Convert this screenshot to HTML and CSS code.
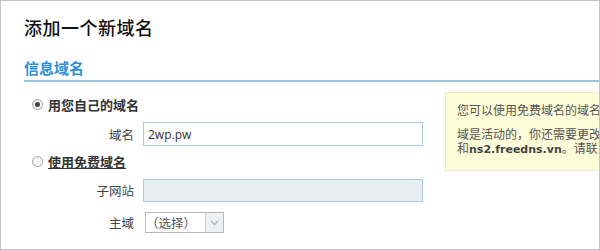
FILE: index.html
```html
<!DOCTYPE html>
<html lang="zh-cn">
<head>
  <meta charset="UTF-8">
  <meta name="viewport" content="width=device-width, initial-scale=1.0">
  <title>添加一个新域名</title>
  <link rel="stylesheet" href="styles.css">
</head>
<body>
  <div class="page">
    <h1>添加一个新域名</h1>
    <h2 class="section-title">信息域名</h2>

    <div class="content">
      <!-- 表单 -->
      <form class="domain-form">
        <label class="radio-row">
          <input type="radio" name="mode" checked>
          <span>用您自己的域名</span>
        </label>
        <div class="field-row">
          <span class="field-label">域名</span>
          <input class="text-input" type="text" value="2wp.pw">
        </div>

        <label class="radio-row">
          <input type="radio" name="mode">
          <span class="underline">使用免费域名</span>
        </label>
        <div class="field-row">
          <span class="field-label">子网站</span>
          <input class="text-input disabled" type="text" disabled>
        </div>
        <div class="field-row">
          <span class="field-label">主域</span>
          <div class="fake-select">
            <span class="fake-select-text">（选择）</span>
            <span class="fake-select-arrow">
              <svg width="9" height="6" viewBox="0 0 9 6"><path d="M1 1 L4.5 4.5 L8 1" fill="none" stroke="#a8b4bc" stroke-width="1.3"/></svg>
            </span>
          </div>
        </div>
      </form>

      <!-- 提示框 -->
      <div class="note">
        <p>您可以使用免费域名的域名服务器。</p>
        <p>域是活动的，你还需要更改域名服务器为ns1.freedns.vn<br>和<b>ns2.freedns.vn</b>。请联系系统管理员。</p>
      </div>
    </div>
  </div>
</body>
</html>
```

FILE: styles.css
```css
* {
  box-sizing: border-box;
}
body {
  margin: 0;
  font-family: "Noto Sans CJK SC", sans-serif;
  color: #333;
  background: #fff;
}
.page {
  width: 600px;
  height: 250px;
  border: 1px solid #c4c4c4;
  padding: 14px 0 0 23px;
  overflow: hidden;
}
h1 {
  margin: 0;
  font-size: 18px;
  line-height: 24px;
  font-weight: 500;
  letter-spacing: 0.5px;
  color: #111;
}
/* 标题下的蓝线 */
.section-title {
  margin: 19px 0 0;
  padding-bottom: 2px;
  font-size: 15px;
  line-height: 20px;
  font-weight: 700;
  color: #2e8fd6;
  border-bottom: 2px solid #94c8e0;
}
.content {
  display: flex;
  align-items: flex-start;
}
.domain-form {
  width: 399px;
  padding: 12px 0 0 7px;
  flex-shrink: 0;
}
.radio-row {
  display: flex;
  align-items: center;
  height: 20px;
  font-size: 13px;
  font-weight: 700;
  color: #333;
}
.radio-row input {
  appearance: none;
  width: 11px;
  height: 11px;
  margin: 0 5px 0 1px;
  border: 1px solid #a0a0a0;
  border-radius: 50%;
  background: #f6f6f6;
  display: grid;
  place-items: center;
}
.radio-row input:checked::after {
  content: "";
  width: 5px;
  height: 5px;
  border-radius: 50%;
  background: #444;
}
.underline {
  text-decoration: underline;
}
.field-row {
  display: flex;
  align-items: center;
  margin-top: 8px;
}
.radio-row + .field-row {
  margin-top: 8px;
}
.field-row + .radio-row {
  margin-top: 5px;
}
.field-row + .field-row {
  margin-top: 10px;
}
.field-label {
  width: 103px;
  text-align: right;
  font-size: 12.5px;
  color: #444;
}
.text-input {
  width: 280px;
  height: 24px;
  margin-left: 9px;
  padding: 0 4px;
  border: 1px solid #a9cde3;
  font-family: "Open Sans", sans-serif;
  font-size: 12px;
  color: #333;
  outline: none;
}
.text-input.disabled {
  height: 23px;
  background: #e6eef1;
}
.fake-select {
  display: flex;
  align-items: center;
  width: 79px;
  height: 21px;
  margin-left: 11px;
  border: 1px solid #b8b8b8;
  background: #fff;
}
.fake-select-text {
  flex: 1;
  font-size: 12.5px;
  color: #555;
  white-space: nowrap;
}
.fake-select-arrow {
  width: 18px;
  height: 19px;
  border-left: 1px solid #d0d0d0;
  background: #eef0f1;
  display: grid;
  place-items: center;
}
/* 黄色提示框 */
.note {
  flex-shrink: 0;
  width: 320px;
  margin: 10px 0 0 22px;
  padding: 10px 11px 13px;
  background: #fefdd9;
  border: 1px solid #ede9c4;
  font-size: 12px;
  line-height: 14px;
  color: #555;
  white-space: nowrap;
}
.note p {
  margin: 0;
}
.note p + p {
  margin-top: 10px;
}
.note b {
  font-family: "DejaVu Sans", sans-serif;
  font-size: 11px;
  color: #444;
}
```
